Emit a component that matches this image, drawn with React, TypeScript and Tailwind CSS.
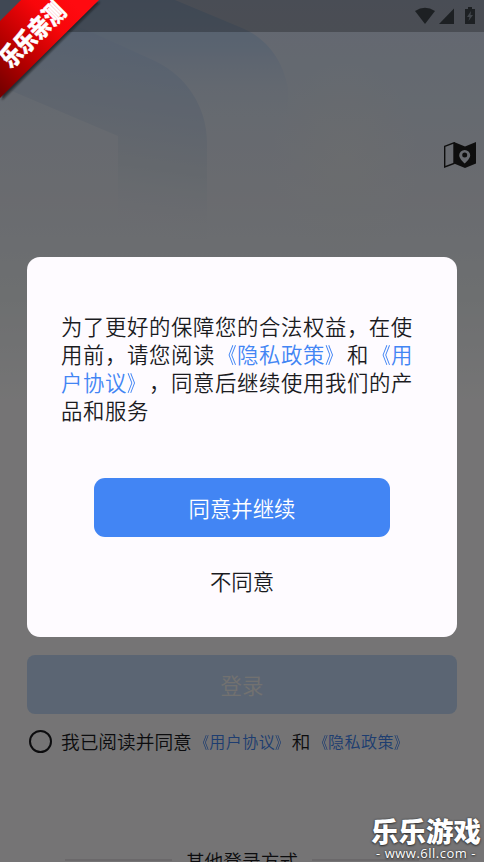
import React from 'react';

interface PolicyLinkProps {
  text: string;
  open?: boolean;
  close?: boolean;
}

// Link text wrapped in narrow title brackets
const PolicyLink: React.FC<PolicyLinkProps> = ({ text, open = true, close = true }) => (
  <span className="text-[#4285f4]">
    {open && <span className="inline-block origin-right scale-x-80">《</span>}
    {text}
    {close && <span className="inline-block origin-left scale-x-80">》</span>}
  </span>
);

const Backdrop: React.FC = () => (
  <svg className="absolute inset-0 h-full w-full" viewBox="0 0 484 862" preserveAspectRatio="none">
    <defs>
      <linearGradient id="sky" x1="0" y1="0" x2="0" y2="400" gradientUnits="userSpaceOnUse">
        <stop offset="0" stopColor="#d6e1f7" />
        <stop offset="0.25" stopColor="#dde6f3" />
        <stop offset="0.5" stopColor="#e6eaf2" />
        <stop offset="0.75" stopColor="#eef2f5" />
        <stop offset="1" stopColor="#fefdfe" />
      </linearGradient>
      <linearGradient id="ridge" x1="0" y1="0" x2="0" y2="120" gradientUnits="userSpaceOnUse">
        <stop offset="0" stopColor="#b9d2f6" />
        <stop offset="0.4" stopColor="#c5d9f4" />
        <stop offset="1" stopColor="#dde6f3" stopOpacity="0" />
      </linearGradient>
      <linearGradient id="arch" x1="180" y1="40" x2="150" y2="240" gradientUnits="userSpaceOnUse">
        <stop offset="0" stopColor="#bcd3f4" />
        <stop offset="0.35" stopColor="#cddbef" />
        <stop offset="0.65" stopColor="#dbe3ee" />
        <stop offset="1" stopColor="#e8ecf3" stopOpacity="0" />
      </linearGradient>
      <radialGradient id="glow">
        <stop offset="0" stopColor="#ebeeed" stopOpacity="0.5" />
        <stop offset="1" stopColor="#ebeeed" stopOpacity="0" />
      </radialGradient>
    </defs>
    <rect width="484" height="862" fill="#fefdfe" />
    <rect width="484" height="400" fill="url(#sky)" />
    <path d="M0 0H175L242 28C266 38 283 60 288 88V120H0Z" fill="url(#ridge)" />
    <path d="M0 0L60 18L155 61C187 76 207 108 207 142V240H118V136L0 86Z" fill="url(#arch)" />
    <ellipse cx="345" cy="160" rx="75" ry="100" fill="url(#glow)" />
  </svg>
);

const StatusBar: React.FC = () => (
  <div className="relative flex h-8 shrink-0 items-start justify-end bg-black/25 pt-[7px] pr-[9px]">
    <svg className="h-[17px] w-[60px]" viewBox="0 0 60 17" fill="#3f464d">
      <path d="M0 4Q10-2.5 20 4L10 17Z" />
      <path d="M39 1.5V17H24Z" />
      <path d="M50 2H53V0H57V2H60V17H50Z" />
      <path d="M56 4L52 10H54.5L53.5 14L58 8H55.5Z" fill="#909aa5" />
    </svg>
  </div>
);

const MapIcon: React.FC = () => (
  <svg className="h-[26px] w-8" viewBox="0 0 32 26">
    <path d="M.7 4.3L10 .8V21.5L.7 25Z" fill="none" stroke="#202020" strokeWidth="1.4" />
    <path
      fillRule="evenodd"
      fill="#202020"
      d="M10 0L21 4.5L32 0V21.5L21 26L10 21.5ZM20.7 8A5.5 5.5 0 0 0 15.2 13.3C15.2 17 20.7 21.5 20.7 21.5S26.2 17 26.2 13.3A5.5 5.5 0 0 0 20.7 8ZM20.7 10.5A2.5 2.5 0 1 1 20.7 15.5A2.5 2.5 0 1 1 20.7 10.5Z"
    />
  </svg>
);

const LoginPage: React.FC = () => (
  <div className="relative flex h-full flex-col">
    <Backdrop />
    <StatusBar />
    <div className="relative flex h-[623px] shrink-0 items-start justify-end pt-[110px] pr-2">
      <MapIcon />
    </div>
    <button className="relative mx-[27px] h-[59px] shrink-0 rounded-lg bg-[#c6dcfa] pt-0.5 text-[21.4px] text-[#f9f7f5]">
      登录
    </button>
    <div className="relative flex h-[54px] shrink-0 items-center pl-[29px] text-[18.7px] whitespace-nowrap text-[#1b1b1f]">
      <span className="mr-[9px] h-[23px] w-[23px] shrink-0 rounded-full border-2 border-[#1b1b1f]" />
      <span>我已阅读并同意</span>
      <span className="ml-px text-[16px] tracking-[0.5px]">
        <PolicyLink text="用户协议" />
      </span>
      <span>和</span>
      <span className="ml-px text-[16px] tracking-[0.5px]">
        <PolicyLink text="隐私政策" />
      </span>
    </div>
    <div className="relative mt-[78px] flex shrink-0 items-center justify-center gap-[14px] text-[18.7px] leading-7 text-[#1b1b1f]">
      <span className="h-0.5 w-[107px] bg-[#e6e3e6]" />
      <span>其他登录方式</span>
      <span className="h-0.5 w-[107px] bg-[#e6e3e6]" />
    </div>
  </div>
);

const ConsentDialog: React.FC = () => (
  <div className="absolute inset-0 bg-black/54 px-[27px] pt-[257px]">
    <div className="flex h-[380px] flex-col items-center rounded-[13px] bg-[#fefbff] pt-[55px] text-[#1b1b1f]">
      <p className="h-[113px] w-[362px] text-[21.4px] leading-[28px] tracking-[0.6px]">
        为了更好的保障您的合法权益，在使<br />
        用前，请您阅读<PolicyLink text="隐私政策" />和<PolicyLink text="用" close={false} /><br />
        <PolicyLink text="户协议" open={false} />，同意后继续使用我们的产<br />
        品和服务
      </p>
      <button className="mt-[53px] h-[59px] w-[296px] rounded-[11px] bg-[#4285f4] pt-px text-[21.4px] text-white">
        同意并继续
      </button>
      <button className="mt-7 text-[21.4px] leading-8">不同意</button>
    </div>
  </div>
);

const CornerRibbon: React.FC = () => (
  <div className="absolute top-0 left-0 h-[104px] w-[104px]">
    <svg className="absolute inset-0" width="104" height="104" viewBox="0 0 104 104">
      <defs>
        <linearGradient id="ribbon" x1="0" y1="90" x2="80" y2="10" gradientUnits="userSpaceOnUse">
          <stop offset="0" stopColor="#780000" />
          <stop offset="0.35" stopColor="#b80000" />
          <stop offset="0.75" stopColor="#f8060a" />
          <stop offset="1" stopColor="#ff0a10" />
        </linearGradient>
        <filter id="soft">
          <feGaussianBlur stdDeviation="1.2" />
        </filter>
      </defs>
      <path d="M22 2L100 2L2 100V22Z" fill="#15181c" opacity="0.75" filter="url(#soft)" />
      <path d="M21 0H99L0 98V21Z" fill="url(#ribbon)" />
    </svg>
    <span className="absolute top-[22px] left-[-8px] w-20 -rotate-45 scale-y-125 text-center text-[20px] leading-6 font-black whitespace-nowrap text-white [-webkit-text-stroke:0.4px_white]">
      乐乐亲测
    </span>
  </div>
);

const SiteMark: React.FC = () => (
  <div className="absolute right-0 bottom-0 flex w-[116px] flex-col items-center whitespace-nowrap text-white [text-shadow:0_0_2px_#333,0_1px_2px_#333]">
    <span className="text-[27.5px] leading-[29px] font-black">乐乐游戏</span>
    <span className="font-['Open_Sans'] text-[13px] leading-[17px] font-normal tracking-[0.5px]">- www.6ll.com -</span>
  </div>
);

const App: React.FC = () => {
  return (
    <div className="relative h-[862px] w-[484px] overflow-hidden font-['Noto_Sans_CJK_SC',sans-serif] font-[350] [text-spacing-trim:space-all]">
      <LoginPage />
      <ConsentDialog />
      <CornerRibbon />
      <SiteMark />
    </div>
  );
};

export default App;
